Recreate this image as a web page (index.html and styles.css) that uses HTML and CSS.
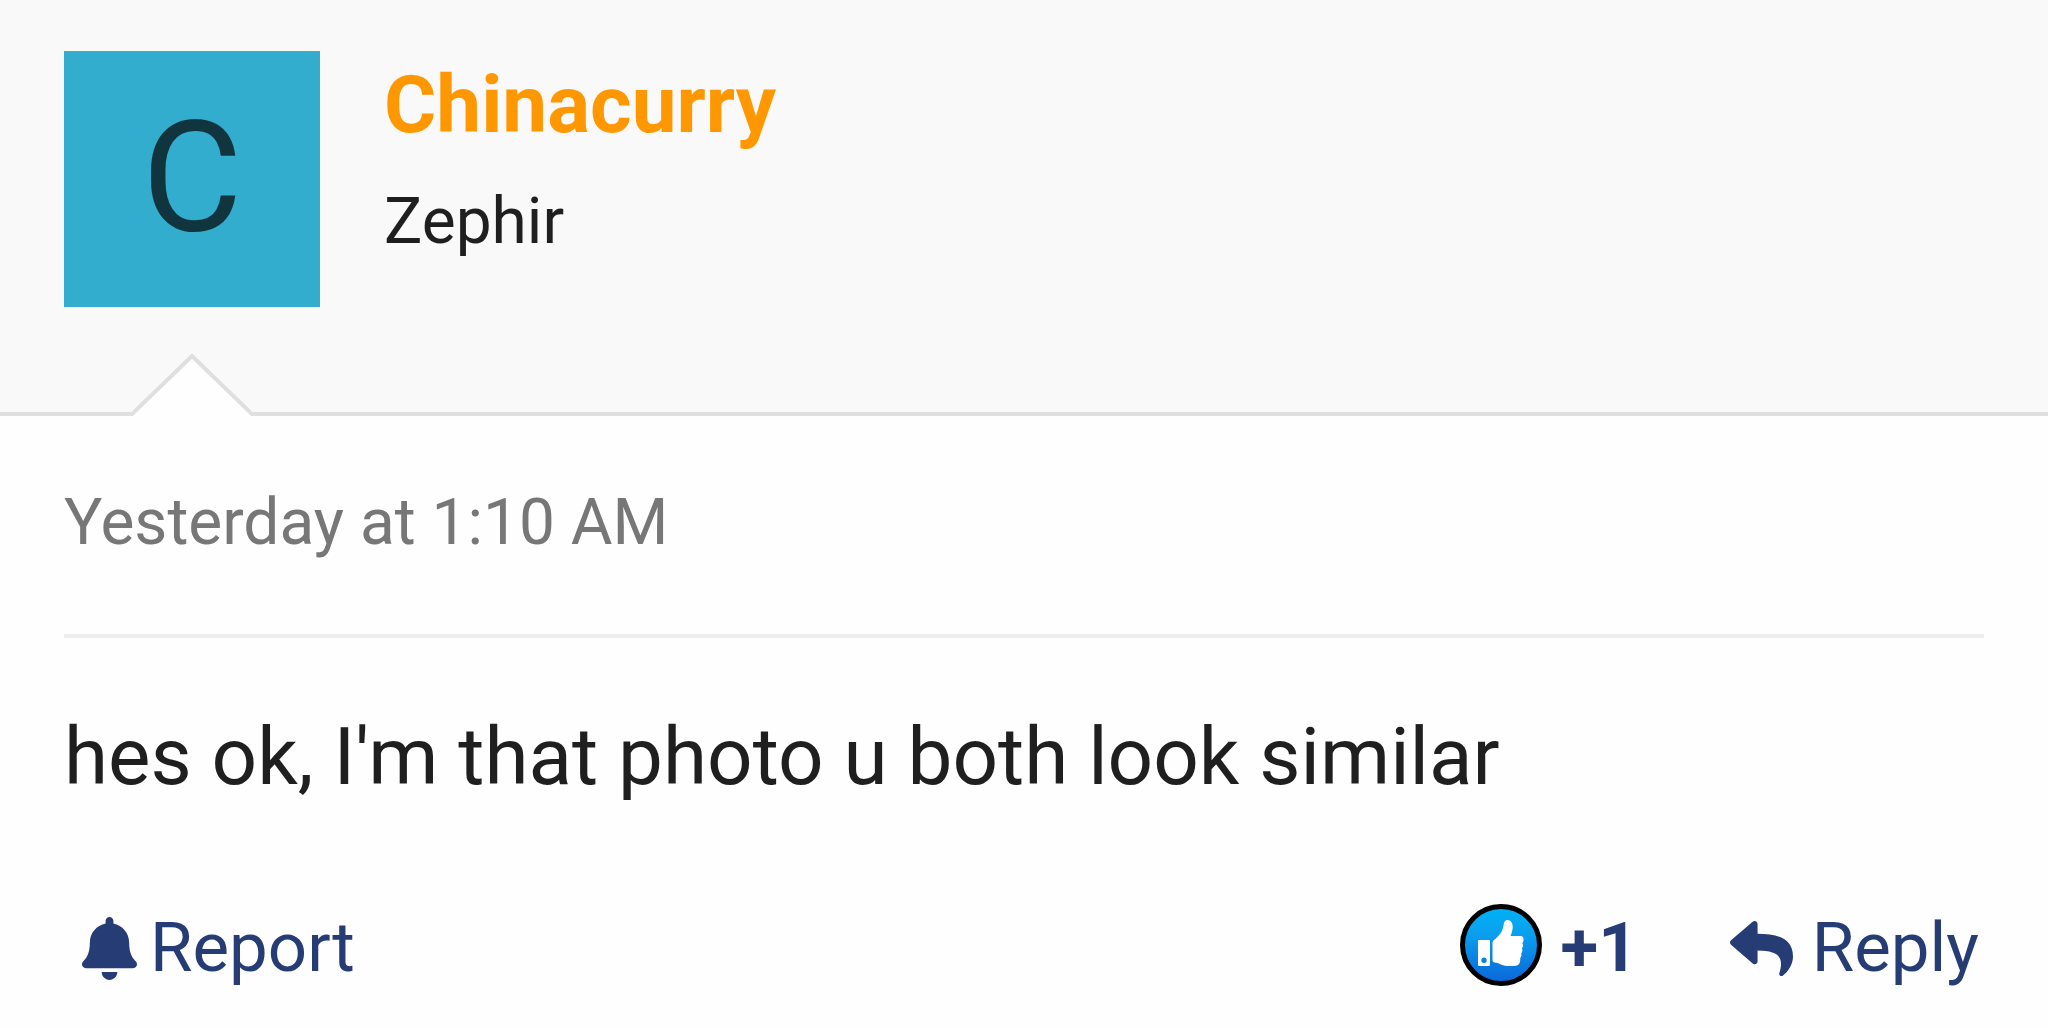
FILE: index.html
```html
<!DOCTYPE html>
<html lang="en">
<head>
<meta charset="utf-8">
<meta name="viewport" content="width=device-width, initial-scale=1">
<title>Chinacurry – post</title>
<link rel="stylesheet" href="styles.css">
</head>
<body>
<article class="post">
  <header class="post-user">
    <a class="avatar" href="#" aria-label="Chinacurry profile">C</a>
    <div class="user-text">
      <a class="user-name" href="#">Chinacurry</a>
      <span class="user-title">Zephir</span>
    </div>
    <svg class="arrow" viewBox="0 0 120 62" aria-hidden="true">
      <path class="arrow-fill" d="M1 62V60L60 2l59 58v2z"/>
      <path class="arrow-line" d="M0 60L60 2l60 58"/>
    </svg>
  </header>
  <div class="post-main">
    <div class="post-date"><time>Yesterday at 1:10 AM</time></div>
    <p class="message">hes ok, I'm that photo u both look similar</p>
    <footer class="actions">
      <a class="action report" href="#">
        <svg class="icon-bell" viewBox="0 0 448 512" aria-hidden="true"><path d="M224 512c35.32 0 63.97-28.65 63.97-64H160.03c0 35.35 28.65 64 63.97 64zm215.39-149.71c-19.32-20.76-55.47-51.99-55.47-154.29 0-77.7-54.48-139.9-127.94-155.16V32c0-17.67-14.32-32-31.98-32s-31.98 14.33-31.98 32v20.84C118.56 68.1 64.08 130.3 64.08 208c0 102.3-36.15 133.53-55.47 154.29-6 6.45-8.66 14.16-8.61 21.71.11 16.4 12.98 32 32.1 32h383.8c19.12 0 32-15.6 32.1-32 .05-7.55-2.61-15.27-8.61-21.71z"/></svg>
        <span>Report</span>
      </a>
      <div class="action-group">
        <button class="action like" type="button">
          <svg class="icon-like" viewBox="0 0 82 82" aria-hidden="true">
            <defs><linearGradient id="like-blue" x1="0" y1="0" x2="0" y2="1"><stop offset="0" stop-color="#00b3f5"/><stop offset=".35" stop-color="#0aa0ee"/><stop offset="1" stop-color="#0a66d8"/></linearGradient></defs>
            <circle cx="41" cy="41" r="38.500" fill="url(#like-blue)" stroke="#000" stroke-width="5"/>
            <path fill="#fff" fill-rule="evenodd" d="M19 36h10q1 0 1 1v24q0 1-1 1H19q-1 0-1-1V37q0-1 1-1zm5 17.500a2.700 2.700 0 1 0 0 5.400 2.700 2.700 0 0 0 0-5.400z"/>
            <path fill="#fff" d="M32.500 38.500q0-1.500 1.500-2.500c5-4 8.500-8 9.500-14.500.4-3.500 1.500-5.500 4-5.500 3.500 0 5.200 3 5.200 7 0 3-1 6-2.200 9H60c3 0 4 1.800 3.500 4.500-.3 1.500-1 2-1 3 .8 1 .8 3-.5 5 .8 1.500.5 3.500-.8 5 .6 1.500.2 3.500-1 4.500.5 5-1.700 8-5.700 8H49c-6 0-9-2.500-13-3.300-2-.4-3.500-.7-3.500-2.700z"/>
          </svg>
          <span>+1</span>
        </button>
        <a class="action reply" href="#">
          <svg class="icon-reply" viewBox="0 0 512 512" aria-hidden="true"><path d="M8.309 189.836L184.313 37.851C199.719 24.546 224 35.347 224 56.015v80.053c160.629 1.839 288 34.032 288 186.258 0 61.441-39.581 122.309-83.333 154.132-13.653 9.931-33.111-2.533-28.077-18.631 45.344-145.012-21.507-183.510-176.590-185.742V360c0 20.700-24.300 31.453-39.687 18.164l-176.004-152c-11.071-9.562-11.086-26.753 0-36.328z"/></svg>
          <span>Reply</span>
        </a>
      </div>
    </footer>
  </div>
</article>
</body>
</html>
```
FILE: styles.css
```css
*,
*::before,
*::after {
  box-sizing: border-box;
}

body {
  margin: 0;
  background: #fefefe;
  color: #1f1f1f;
  font-family: Roboto, sans-serif;
  font-size: 64px;
  line-height: 86px;
}

a {
  text-decoration: none;
}

.post-user {
  position: relative;
  display: flex;
  gap: 64px;
  padding: 51px 64px 105px;
  background: #f9f9f9;
  border-bottom: 4px solid #dfdfdf;
}

.avatar {
  flex: none;
  width: 256px;
  height: 256px;
  background: #33adcd;
  color: #10353f;
  font-size: 154px;
  line-height: 256px;
  text-align: center;
}

.user-text {
  display: flex;
  flex-direction: column;
  gap: 20px;
}

.user-name {
  color: #ff9800;
  font-size: 80px;
  font-weight: 700;
  line-height: 108px;
}

/* Notch that points from the message up to the avatar */
.arrow {
  position: absolute;
  left: 132px;
  bottom: -4px;
  width: 120px;
  height: 62px;
}

.arrow-fill {
  fill: #fefefe;
}

.arrow-line {
  fill: none;
  stroke: #dfdfdf;
  stroke-width: 4;
}

.post-main {
  padding: 64px 64px 32px;
}

.post-date {
  padding-bottom: 68px;
  border-bottom: 4px solid #eee;
  color: #777;
}

.message {
  margin: 65px 0 93px;
  font-size: 80px;
  line-height: 108px;
}

.actions,
.action-group,
.action {
  display: flex;
  align-items: center;
}

.actions {
  justify-content: space-between;
  padding: 0 5px 0 18px;
}

.action-group {
  gap: 92px;
}

.action {
  padding: 0;
  border: 0;
  background: none;
  color: #263c75;
  font-family: inherit;
  font-size: 69px;
  line-height: 88px;
}

.action svg {
  flex: none;
  fill: currentColor;
}

.report {
  gap: 13px;
}

.like {
  gap: 19px;
  font-weight: 700;
}

.reply {
  gap: 19px;
}

.icon-bell {
  width: 55px;
  height: 63px;
}

.icon-like {
  width: 82px;
  height: 82px;
  margin-bottom: 6px;
}

.icon-reply {
  width: 63px;
  height: 63px;
}
```
